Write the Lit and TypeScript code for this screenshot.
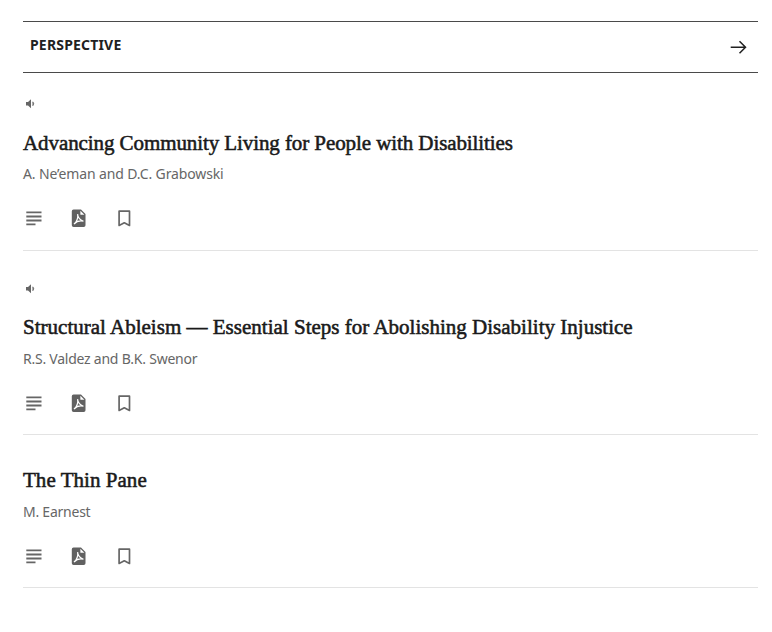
import { LitElement, html, css, nothing } from "lit";
import { customElement } from "lit/decorators.js";

const articles = [
  { kind: "audio first", audio: true, title: "Advancing Community Living for People with Disabilities", authors: "A. Ne’eman and D.C. Grabowski" },
  { kind: "audio second", audio: true, title: "Structural Ableism — Essential Steps for Abolishing Disability Injustice", authors: "R.S. Valdez and B.K. Swenor" },
  { kind: "third", audio: false, title: "The Thin Pane", authors: "M. Earnest" },
];

@customElement("app-root")
export class AppRoot extends LitElement {
  static styles = css`
    :host { display: block; height: 632px; background: #fff; padding: 21px 14px 0 23px; box-sizing: border-box; overflow: hidden; }
    header { height: 52px; box-sizing: border-box; border-top: 1px solid #4a4a4a; border-bottom: 1px solid #4a4a4a; display: flex; justify-content: space-between; align-items: center; padding: 0 10px 0 7px; }
    h2 { margin: 0 0 4px; font: 700 14px/20px "Noto Sans", sans-serif; letter-spacing: 0.18px; color: #212121; }
    .arrow { width: 18px; height: 18px; }
    article { height: 153px; box-sizing: border-box; border-bottom: 1px solid #e3e3e3; padding-top: 33px; }
    article.audio { height: 184px; padding-top: 33px; }
    article.first { height: 178px; padding-top: 26px; }
    .speaker { width: 12px; height: 10px; margin: 0 0 22px 2px; }
    .second .speaker { margin-bottom: 21px; }
    h3 { margin: 0; font: 400 21px/24px "Liberation Serif", serif; color: #1a1a1a; -webkit-text-stroke: 0.55px #1a1a1a; }
    .first h3 { letter-spacing: -0.085px; }
    .second h3 { letter-spacing: 0.01px; }
    .third h3 { letter-spacing: 0.04px; }
    p { margin: 11px 0 0; font: 14px/18px "Noto Sans", sans-serif; letter-spacing: -0.13px; color: #666; }
    .second p, .third p { letter-spacing: -0.24px; }
    .first p { margin-top: 10px; }
    nav { display: flex; margin-top: 23px; gap: 22px; margin-left: -2px; }
    svg { display: block; }
  `;
  render() {
    return html`<header>
        <h2>PERSPECTIVE</h2>
        <svg class="arrow" viewBox="0 0 18 18" fill="none" stroke="#212121" stroke-width="1.5"><path d="M.7 9.2h15M9.5 3.2l6 6-6 6" /></svg>
      </header>
      ${articles.map((a) => html`<article class=${a.kind}>
        ${a.audio ? html`<svg class="speaker" viewBox="0 0 12 10"><path d="M1 3h2l3-2.8v9L3 6.5H1z" fill="#666"/><path d="M7.8 2.8q2 2 0 4z" fill="#666" stroke="#666" stroke-width=".6"/></svg>` : nothing}
        <h3>${a.title}</h3>
        <p>${a.authors}</p>
        <nav>
          <svg width="24" height="24" viewBox="0 0 24 24" stroke="#666" stroke-width="1.8"><path d="M5.3 6.4h15.2M5.3 10.5h15.2M5.3 14.5h15.2M5.3 18.4h9.2"/></svg>
          <svg width="24" height="24" viewBox="0 0 24 24"><path d="M6.5 3.5H14l4.5 4.6v11.1q0 1.8-1.8 1.8H6.6q-1.8 0-1.8-1.8v-14q0-1.7 1.7-1.7z" fill="#616161"/><path d="M13.4 4.8v4h4z" fill="#fff"/><path d="M10.6 8q.3 5.2 5.9 7.2-5.5-1.4-9.5 2.8 4.5-3.5 3.6-10z" fill="none" stroke="#fff" stroke-width="1.15"/></svg>
          <svg width="24" height="24" viewBox="0 0 24 24" fill="none" stroke="#666" stroke-width="1.7" stroke-linejoin="round"><path d="M6.1 5.2h10.4v14.2l-5.2-2.6-5.2 2.6z"/></svg>
        </nav>
      </article>`)}`;
  }
}
